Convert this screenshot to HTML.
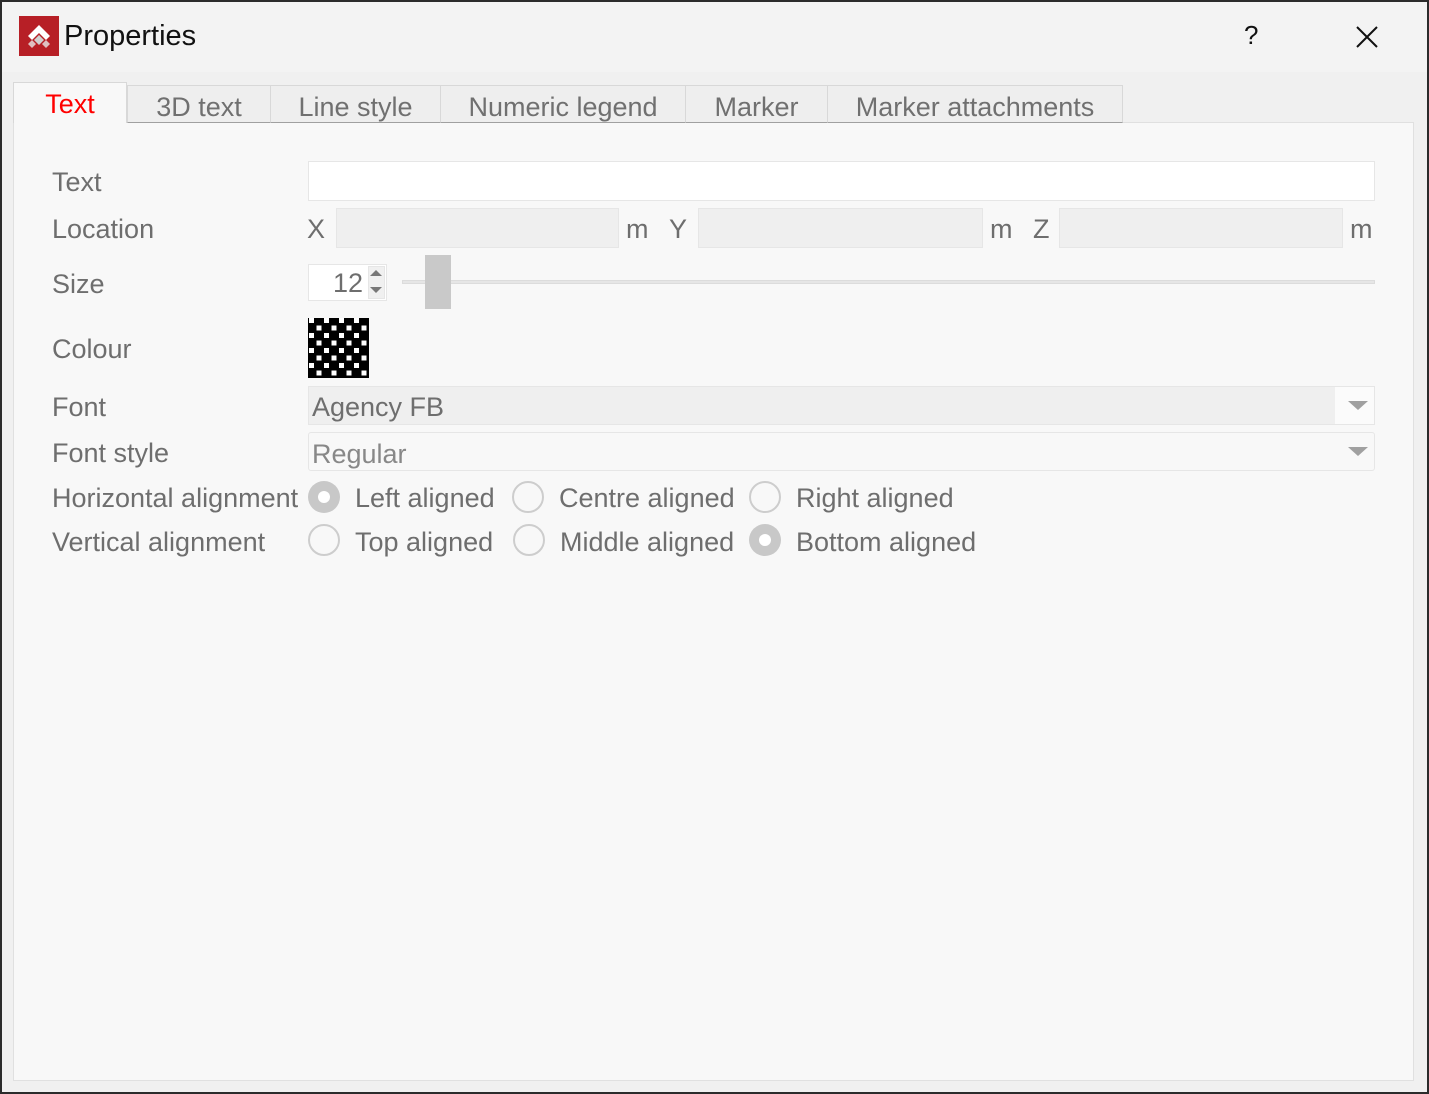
<!DOCTYPE html>
<html><head><style>
*{margin:0;padding:0;box-sizing:border-box}
body{width:1429px;height:1094px;background:#2b2b2b;position:relative;overflow:hidden;font-family:"Liberation Sans",sans-serif}
.win{position:absolute;left:2px;top:2px;width:1425px;height:1090px;background:#f0f0f0}
.title{position:absolute;left:0;top:0;width:1425px;height:70px;background:#f3f3f3}
.a{position:absolute;white-space:nowrap}
.lbl{font-size:27px;color:#6e6e6e;line-height:30px}
.tab{position:absolute;top:85px;height:38px;background:#eeeeee;border:1px solid #d8d8d8;border-bottom:1px solid #a0a0a0;font-size:27px;color:#707070;text-align:center;line-height:42px}
.panel{position:absolute;left:13px;top:122px;width:1401px;height:959px;background:#f8f8f8;border:1px solid #e0e0e0}
.box{position:absolute;border:1px solid #e6e6e6}
.radio{position:absolute;width:32px;height:32px;border-radius:50%;border:2px solid #cdcdcd;background:#f8f8f8}
.radio.on{border:none;background:#c8c8c8}
.radio.on::after{content:"";position:absolute;left:10px;top:10px;width:12px;height:12px;border-radius:50%;background:#fff}
.tri{position:absolute;width:0;height:0;border-left:10px solid transparent;border-right:10px solid transparent;border-top:9px solid #a0a0a0}
</style></head><body>
<div class="win">
<div class="title"></div>
</div>
<svg class="a" style="left:19px;top:16px" width="40" height="40" viewBox="0 0 40 40">
<rect width="40" height="40" fill="#b71f26"/>
<path d="M20 9 L31 20 L27 24 L20 17 L13 24 L9 20 Z" fill="#fff"/>
<path d="M20 19 L25 24 L20 29 L15 24 Z" fill="#d0d0d0"/>
<path d="M13 24 L17 28 L13 32 L9 28Z M27 24 L31 28 L27 32 L23 28Z" fill="#e8e8e8" opacity=".8"/>
</svg>
<div class="a" style="left:64px;top:20px;font-size:29px;color:#111">Properties</div>
<div class="a" style="left:1244px;top:20px;font-size:26px;color:#111">?</div>
<svg class="a" style="left:1356px;top:26px" width="22" height="22"><path d="M1 1L21 21M21 1L1 21" stroke="#111" stroke-width="2"/></svg>

<div class="panel"></div>
<div class="tab" style="left:13px;top:82px;width:114px;height:41px;background:#f8f8f8;border-bottom:none;color:#ff0000;line-height:42px">Text</div>
<div class="tab" style="left:127px;width:144px">3D text</div>
<div class="tab" style="left:270px;width:171px">Line style</div>
<div class="tab" style="left:440px;width:246px">Numeric legend</div>
<div class="tab" style="left:685px;width:143px">Marker</div>
<div class="tab" style="left:827px;width:296px">Marker attachments</div>

<div class="a lbl" style="left:52px;top:167px">Text</div>
<div class="a lbl" style="left:52px;top:214px">Location</div>
<div class="a lbl" style="left:52px;top:269px">Size</div>
<div class="a lbl" style="left:52px;top:334px">Colour</div>
<div class="a lbl" style="left:52px;top:392px">Font</div>
<div class="a lbl" style="left:52px;top:438px">Font style</div>
<div class="a lbl" style="left:52px;top:483px">Horizontal alignment</div>
<div class="a lbl" style="left:52px;top:527px">Vertical alignment</div>

<div class="box" style="left:308px;top:161px;width:1067px;height:40px;background:#fff"></div>

<div class="a lbl" style="left:307px;top:214px">X</div>
<div class="box" style="left:336px;top:208px;width:283px;height:40px;background:#efefef"></div>
<div class="a lbl" style="left:626px;top:214px">m</div>
<div class="a lbl" style="left:669px;top:214px">Y</div>
<div class="box" style="left:698px;top:208px;width:285px;height:40px;background:#efefef"></div>
<div class="a lbl" style="left:990px;top:214px">m</div>
<div class="a lbl" style="left:1033px;top:214px">Z</div>
<div class="box" style="left:1059px;top:208px;width:284px;height:40px;background:#efefef"></div>
<div class="a lbl" style="left:1350px;top:214px">m</div>

<div class="box" style="left:308px;top:264px;width:79px;height:37px;background:#fff"></div>
<div class="a lbl" style="left:333px;top:268px">12</div>
<div class="box" style="left:368px;top:266px;width:17px;height:33px;background:#f0f0f0"></div>
<div class="tri" style="left:370px;top:270px;border-top:none;border-bottom:6px solid #777;border-left-width:6px;border-right-width:6px"></div>
<div class="tri" style="left:370px;top:287px;border-top:6px solid #777;border-left-width:6px;border-right-width:6px"></div>
<div class="a" style="left:402px;top:280px;width:973px;height:4px;background:#e6e6e6;border:1px solid #dcdcdc"></div>
<div class="a" style="left:425px;top:255px;width:26px;height:54px;background:#c9c9c9"></div>

<svg class="a" style="left:308px;top:318px" width="61" height="60">
<defs><pattern id="p" width="15" height="15" patternUnits="userSpaceOnUse">
<rect width="15" height="15" fill="#000"/>
<rect x="1" y="0" width="5" height="5" fill="#fff"/><rect x="8.5" y="7.5" width="5" height="5" fill="#fff"/>
</pattern></defs>
<rect width="61" height="60" fill="url(#p)"/>
</svg>

<div class="box" style="left:308px;top:386px;width:1067px;height:39px;background:#fbfbfb"></div>
<div class="a" style="left:309px;top:387px;width:1026px;height:37px;background:#efefef"></div>
<div class="a lbl" style="left:312px;top:392px">Agency FB</div>
<div class="tri" style="left:1348px;top:401px"></div>
<div class="box" style="left:308px;top:432px;width:1067px;height:39px;background:#f8f8f8;border-radius:3px"></div>
<div class="a lbl" style="left:312px;top:439px;color:#888">Regular</div>
<div class="tri" style="left:1348px;top:447px"></div>

<div class="radio on" style="left:308px;top:481px"></div>
<div class="a lbl" style="left:355px;top:483px">Left aligned</div>
<div class="radio" style="left:512px;top:481px"></div>
<div class="a lbl" style="left:559px;top:483px">Centre aligned</div>
<div class="radio" style="left:749px;top:481px"></div>
<div class="a lbl" style="left:796px;top:483px">Right aligned</div>

<div class="radio" style="left:308px;top:524px"></div>
<div class="a lbl" style="left:355px;top:527px">Top aligned</div>
<div class="radio" style="left:513px;top:524px"></div>
<div class="a lbl" style="left:560px;top:527px">Middle aligned</div>
<div class="radio on" style="left:749px;top:524px"></div>
<div class="a lbl" style="left:796px;top:527px">Bottom aligned</div>
</body></html>
